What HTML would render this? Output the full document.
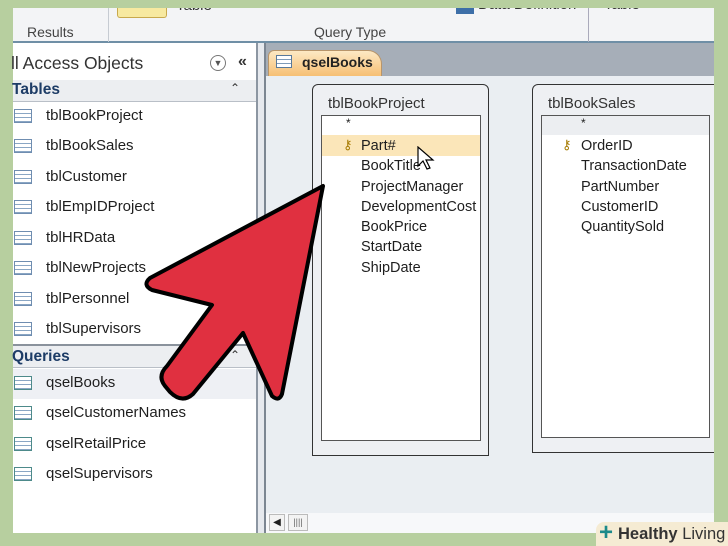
<!DOCTYPE html>
<html><head><meta charset="utf-8"><style>
*{margin:0;padding:0;box-sizing:border-box}
body{width:728px;height:546px;background:#b7cf9f;position:relative;overflow:hidden;font-family:"Liberation Sans",sans-serif;color:#1e1e1e}
.a{position:absolute}
.t{position:absolute;font-size:15px;white-space:nowrap}
.ic{position:absolute;width:18px;height:14px;border:1px solid #6f8db0;background:repeating-linear-gradient(#fff 0 3px,#8aa6c4 3px 4px);}
.row{position:absolute;font-size:14.5px;white-space:nowrap}
</style></head><body>
<div class="a" style="left:13px;top:8px;width:701px;height:34px;background:#f3f4f6"></div>
<div class="a" style="left:13px;top:41px;width:701px;height:2px;background:#6f8fa6"></div>
<div class="a" style="left:117px;top:6px;width:50px;height:12px;background:#f7e9a0;border:1px solid #c8a94d;border-top:none;border-radius:0 0 3px 3px"></div>
<div class="t" style="left:176px;top:-3px;font-size:15px;color:#333">Table</div>
<div class="a" style="left:108px;top:8px;width:1px;height:34px;background:#c6cbd2"></div>
<div class="a" style="left:588px;top:8px;width:1px;height:34px;background:#aab"></div>
<div class="t" style="left:27px;top:24px;font-size:14px;color:#444">Results</div>
<div class="t" style="left:314px;top:24px;font-size:14px;color:#444">Query Type</div>
<div class="a" style="left:456px;top:8px;width:18px;height:6px;background:#3d6fa8"></div>
<div class="t" style="left:478px;top:-4px;font-size:15px;color:#333">Data Definition</div>
<div class="t" style="left:604px;top:-4px;font-size:15px;color:#333">Table</div>
<div class="a" style="left:0;top:0;width:728px;height:8px;background:#b7cf9f"></div>
<div class="a" style="left:13px;top:43px;width:245px;height:490px;background:#fff"></div>
<div class="a" style="left:256px;top:43px;width:10px;height:490px;background:#e6e9ee;border-left:2px solid #8c96a2;border-right:2px solid #7c8692"></div>
<div class="t" style="left:11px;top:53px;font-size:17.5px;color:#333">ll Access Objects</div>
<div class="a" style="left:210px;top:55px;width:16px;height:16px;border:1px solid #777;border-radius:50%;font-size:9px;text-align:center;line-height:14px;color:#555">▼</div>
<div class="t" style="left:238px;top:53px;font-size:16px;font-weight:bold;color:#333">«</div>
<div class="a" style="left:13px;top:80px;width:243px;height:22px;background:#eceef1;border-bottom:1px solid #b9bfc7"></div>
<div class="t" style="left:12px;top:81px;font-size:15.5px;font-weight:bold;color:#1d3c66">Tables</div>
<div class="t" style="left:230px;top:81px;font-size:12px;color:#333">⌃</div>
<div class="ic" style="left:14px;top:109px"></div><div class="t" style="left:46px;top:107px">tblBookProject</div>
<div class="ic" style="left:14px;top:139px"></div><div class="t" style="left:46px;top:137px">tblBookSales</div>
<div class="ic" style="left:14px;top:170px"></div><div class="t" style="left:46px;top:168px">tblCustomer</div>
<div class="ic" style="left:14px;top:200px"></div><div class="t" style="left:46px;top:198px">tblEmpIDProject</div>
<div class="ic" style="left:14px;top:231px"></div><div class="t" style="left:46px;top:229px">tblHRData</div>
<div class="ic" style="left:14px;top:261px"></div><div class="t" style="left:46px;top:259px">tblNewProjects</div>
<div class="ic" style="left:14px;top:292px"></div><div class="t" style="left:46px;top:290px">tblPersonnel</div>
<div class="ic" style="left:14px;top:322px"></div><div class="t" style="left:46px;top:320px">tblSupervisors</div>
<div class="a" style="left:13px;top:344px;width:243px;height:2px;background:#8a929c"></div>
<div class="a" style="left:13px;top:346px;width:243px;height:22px;background:#eceef1;border-bottom:1px solid #b9bfc7"></div>
<div class="t" style="left:12px;top:348px;font-size:15.5px;font-weight:bold;color:#1d3c66">Queries</div>
<div class="t" style="left:230px;top:348px;font-size:12px;color:#333">⌃</div>
<div class="a" style="left:13px;top:369px;width:243px;height:30px;background:#eef0f4"></div>
<div class="ic" style="left:14px;top:376px;border-color:#4d8a8a"></div><div class="t" style="left:46px;top:374px">qselBooks</div>
<div class="ic" style="left:14px;top:406px;border-color:#4d8a8a"></div><div class="t" style="left:46px;top:404px">qselCustomerNames</div>
<div class="ic" style="left:14px;top:437px;border-color:#4d8a8a"></div><div class="t" style="left:46px;top:435px">qselRetailPrice</div>
<div class="ic" style="left:14px;top:467px;border-color:#4d8a8a"></div><div class="t" style="left:46px;top:465px">qselSupervisors</div>
<div class="a" style="left:266px;top:43px;width:448px;height:33px;background:#a6aeb8"></div>
<div class="a" style="left:266px;top:76px;width:448px;height:457px;background:#eaeef2"></div>
<div class="a" style="left:266px;top:513px;width:448px;height:20px;background:#f7f8fa"></div>
<div class="a" style="left:268px;top:50px;width:114px;height:26px;background:linear-gradient(#fde9c4,#f6bf74);border:1px solid #b8956a;border-bottom:none;border-radius:6px 14px 0 0"></div>
<div class="a" style="left:276px;top:55px;width:16px;height:13px;border:1px solid #5a7a9a;background:repeating-linear-gradient(#fff 0 3px,#7f9bb8 3px 4px)"></div>
<div class="t" style="left:302px;top:54px;font-size:14px;font-weight:bold;color:#222">qselBooks</div>
<div class="a" style="left:269px;top:514px;width:16px;height:17px;border:1px solid #bbb;background:#f3f3f3;font-size:10px;text-align:center;line-height:15px">◀</div>
<div class="a" style="left:288px;top:514px;width:20px;height:17px;border:1px solid #bbb;background:#f3f3f3;font-size:9px;text-align:center;line-height:15px;color:#666">||||</div>
<div class="a" style="left:312px;top:84px;width:177px;height:372px;border:1px solid #333;border-radius:6px 6px 0 0;background:#eef0f3"></div>
<div class="t" style="left:328px;top:95px;color:#333">tblBookProject</div>
<div class="a" style="left:321px;top:115px;width:160px;height:326px;border:1px solid #555;background:#fff"></div>
<div class="a" style="left:322px;top:135px;width:158px;height:21px;background:#fbe6b9"></div>
<div class="t" style="left:346px;top:116px;font-size:12px">*</div>
<div class="t" style="left:343px;top:137px;font-size:13px;color:#a67a00">⚷</div>
<div class="row" style="left:361px;top:138px">Part#</div>
<div class="row" style="left:361px;top:158px">BookTitle</div>
<div class="row" style="left:361px;top:179px">ProjectManager</div>
<div class="row" style="left:361px;top:199px">DevelopmentCost</div>
<div class="row" style="left:361px;top:219px">BookPrice</div>
<div class="row" style="left:361px;top:239px">StartDate</div>
<div class="row" style="left:361px;top:260px">ShipDate</div>
<svg class="a" style="left:416px;top:146px" width="20" height="26" viewBox="0 0 20 26"><path d="M2 1 L2 20 L7 15 L11 23 L14 22 L10 14 L17 14 Z" fill="#fff" stroke="#000" stroke-width="1.2"/></svg>
<div class="a" style="left:532px;top:84px;width:190px;height:369px;border:1px solid #333;border-radius:6px 6px 0 0;background:#eef0f3"></div>
<div class="t" style="left:548px;top:95px;color:#333">tblBookSales</div>
<div class="a" style="left:541px;top:115px;width:169px;height:323px;border:1px solid #555;background:#fff"></div>
<div class="a" style="left:542px;top:116px;width:167px;height:19px;background:#eceef1"></div>
<div class="t" style="left:581px;top:116px;font-size:12px">*</div>
<div class="t" style="left:562px;top:137px;font-size:13px;color:#a67a00">⚷</div>
<div class="row" style="left:581px;top:138px">OrderID</div>
<div class="row" style="left:581px;top:158px">TransactionDate</div>
<div class="row" style="left:581px;top:179px">PartNumber</div>
<div class="row" style="left:581px;top:199px">CustomerID</div>
<div class="row" style="left:581px;top:219px">QuantitySold</div>
<div class="a" style="left:714px;top:0;width:14px;height:546px;background:#b7cf9f"></div>
<svg class="a" style="left:0;top:0" width="728" height="546"><path d="M323 186 L282 394 Q279 402 272 396 L243 333 L193 394 Q182 404 170 392 L165 386 Q157 376 167 366 L212 305 L152 290 Q142 285 150 278 Z" fill="#e03040" stroke="#000" stroke-width="4" stroke-linejoin="round"/></svg>
<div class="a" style="left:596px;top:522px;width:132px;height:24px;background:#f5ebd3;border-radius:8px 0 0 0"></div>
<div class="t" style="left:599px;top:522px;font-size:24px;font-weight:bold;color:#1c8a8a;line-height:22px">+</div>
<div class="t" style="left:618px;top:525px;font-size:16.5px;color:#333"><b>Healthy</b> Living</div>
</body></html>
